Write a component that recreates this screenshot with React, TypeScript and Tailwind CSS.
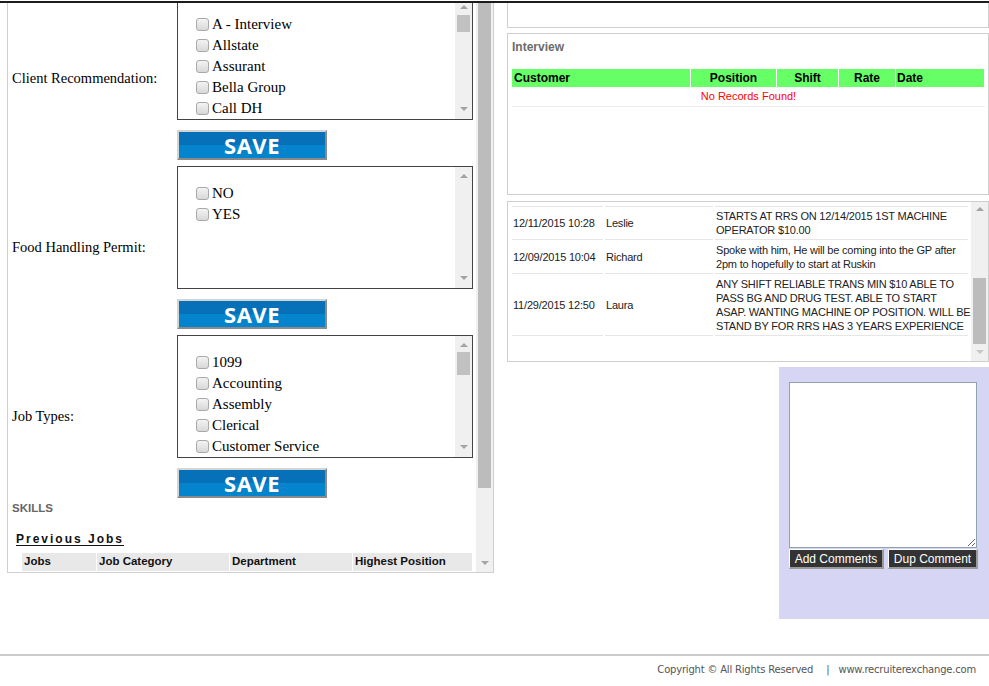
import React from 'react';

// Scrolled candidate profile page: checkbox pickers on the left, interview + notes on the right

interface PickerRow {
  label: string;
  items: string[];
  thumb?: { top: number; height: number };
}

const pickers: PickerRow[] = [
  {
    label: 'Client Recommendation:',
    items: ['A - Interview', 'Allstate', 'Assurant', 'Bella Group', 'Call DH'],
    thumb: { top: 6, height: 17 },
  },
  { label: 'Food Handling Permit:', items: ['NO', 'YES'] },
  {
    label: 'Job Types:',
    items: ['1099', 'Accounting', 'Assembly', 'Clerical', 'Customer Service'],
    thumb: { top: 5, height: 23 },
  },
];

interface Note {
  date: string;
  user: string;
  lines: string[];
  height: number;
}

const notes: Note[] = [
  {
    date: '12/11/2015 10:28',
    user: 'Leslie',
    lines: ['STARTS AT RRS ON 12/14/2015 1ST MACHINE', 'OPERATOR $10.00'],
    height: 33,
  },
  {
    date: '12/09/2015 10:04',
    user: 'Richard',
    lines: ['Spoke with him, He will be coming into the GP after', '2pm to hopefully to start at Ruskin'],
    height: 34,
  },
  {
    date: '11/29/2015 12:50',
    user: 'Laura',
    lines: [
      'ANY SHIFT RELIABLE TRANS MIN $10 ABLE TO',
      'PASS BG AND DRUG TEST. ABLE TO START',
      'ASAP. WANTING MACHINE OP POSITION. WILL BE',
      'STAND BY FOR RRS HAS 3 YEARS EXPERIENCE',
    ],
    height: 62,
  },
];

const UpArrow = ({ light }: { light?: boolean }) => (
  <span
    className={
      'block w-0 h-0 border-x-[4px] border-x-transparent border-b-[4px] ' +
      (light ? 'border-b-[#c8c8c8]' : 'border-b-[#a3a3a3]')
    }
  />
);

const DownArrow = ({ light }: { light?: boolean }) => (
  <span
    className={
      'block w-0 h-0 border-x-[4px] border-x-transparent border-t-[4px] ' +
      (light ? 'border-t-[#c8c8c8]' : 'border-t-[#a3a3a3]')
    }
  />
);

const Check = () => (
  <span className="block w-[13px] h-[13px] mr-[3px] shrink-0 rounded-[3px] border border-[#a9a9a9] bg-[linear-gradient(to_bottom,#f3f3f3,#d8d8d8)]" />
);

const SaveButton = () => (
  <div className="mt-[10px] w-[150px] h-[30px] border-2 border-t-[#d4d4d4] border-l-[#d4d4d4] border-b-[#8a8a8a] border-r-[#8a8a8a] bg-[linear-gradient(to_bottom,#0670b8_0%,#0670b8_50%,#0584ce_50%,#0584ce_100%)] flex items-center justify-center">
    <span className="font-['Open_Sans',sans-serif] font-bold text-[22px] leading-none text-white tracking-[0.5px]">SAVE</span>
  </div>
);

const Picker = ({ row }: { row: PickerRow }) => (
  <div className="flex">
    <div className="w-[169px] pl-[4px] flex items-center font-['Liberation_Serif',serif] text-[14.5px] text-black">
      {row.label}
    </div>
    <div className="w-[296px]">
      <div className="h-[123px] border border-[#444] flex">
        <div className="flex-1 pt-[16px] pl-[18px] font-['Liberation_Serif',serif] text-[15px] text-black">
          {row.items.map((item) => (
            <div key={item} className="flex items-center h-[21px]">
              <Check />
              <span>{item}</span>
            </div>
          ))}
        </div>
        <div className="w-[17px] bg-[#f0f0f0] flex flex-col items-center">
          <div className="mt-[7px]">
            <UpArrow />
          </div>
          {row.thumb && (
            <div
              className="w-[13px] bg-[#c1c1c1]"
              style={{ marginTop: row.thumb.top, height: row.thumb.height }}
            />
          )}
          <div className="mt-auto mb-[8px]">
            <DownArrow />
          </div>
        </div>
      </div>
      <SaveButton />
    </div>
  </div>
);

const App: React.FC = () => {
  return (
    <div className="w-[989px] h-[686px] bg-white overflow-hidden font-['Liberation_Sans',Arial,sans-serif]">
      <div className="h-[3px] border-b-2 border-[#1c1c1c]" />

      <div className="flex items-start h-[651px]">
        {/* Left scrolling form panel */}
        <div className="ml-[7px] w-[487px] h-[570px] border-x border-b border-[#cfcfcf] flex overflow-hidden">
          <div className="w-[468px] overflow-hidden">
            <div className="-mt-[6px] flex flex-col gap-[6px]">
              {pickers.map((p) => (
                <Picker key={p.label} row={p} />
              ))}
            </div>
            <div className="mt-[3px] pl-[4px] text-[11.5px] leading-[14px] font-bold text-[#666]">SKILLS</div>
            <div className="mt-[16px] pl-[8px] text-[12px] leading-[16px] font-bold tracking-[2px] text-[#111] underline underline-offset-2">
              Previous Jobs
            </div>
            <div className="mt-[6px] ml-[14px] w-[450px] grid grid-cols-[74px_132px_122px_119px] gap-x-px text-[11.5px] font-bold text-[#111]">
              {['Jobs', 'Job Category', 'Department', 'Highest Position'].map((h) => (
                <div key={h} className="h-[18px] bg-[#e8e8e8] pl-[2px] flex items-center">
                  {h}
                </div>
              ))}
            </div>
          </div>
          <div className="w-[17px] bg-[#f0f0f0] flex flex-col items-center">
            <div className="w-[13px] h-[485px] bg-[#bcbcbc]" />
            <div className="mt-auto mb-[7px]">
              <DownArrow />
            </div>
          </div>
        </div>

        {/* Right column */}
        <div className="ml-[13px] w-[482px] flex flex-col">
          <div className="h-[25px] border-x border-b border-[#cfcfcf]" />

          <div className="mt-[5px] h-[162px] border border-[#cfcfcf] pl-[4px] pr-[3px]">
            <div className="pt-[6px] text-[12px] leading-[14px] font-bold text-[#6b6b6b]">Interview</div>
            <div className="mt-[15px] grid grid-cols-[178px_85px_61px_56px_88px] gap-x-px text-[12px] font-bold text-black">
              <div className="h-[18px] bg-[#66ff66] pl-[2px] flex items-center">Customer</div>
              <div className="h-[18px] bg-[#66ff66] flex items-center justify-center">Position</div>
              <div className="h-[18px] bg-[#66ff66] flex items-center justify-center">Shift</div>
              <div className="h-[18px] bg-[#66ff66] flex items-center justify-center">Rate</div>
              <div className="h-[18px] bg-[#66ff66] pl-[1px] flex items-center">Date</div>
            </div>
            <div className="h-[20px] border-b border-[#ececec] flex items-center justify-center text-[11px] text-[#ff0000]">
              No Records Found!
            </div>
          </div>

          <div className="mt-[6px] h-[161px] border border-[#cfcfcf] flex">
            <div className="flex-1 pt-[4px] pl-[4px] pr-[3px] text-[11px] leading-[14px] tracking-[-0.2px] text-[#222] whitespace-nowrap overflow-hidden">
              {notes.map((n) => (
                <div key={n.date} className="grid grid-cols-[91px_108px_253px] gap-x-[2px]" style={{ height: n.height }}>
                  <div className="border-t border-[#e6e6e6] pl-[1px] flex items-center">{n.date}</div>
                  <div className="border-t border-[#e6e6e6] pl-[1px] flex items-center">{n.user}</div>
                  <div className="border-t border-[#e6e6e6] pl-[1px] flex flex-col justify-center">
                    {n.lines.map((l) => (
                      <div key={l}>{l}</div>
                    ))}
                  </div>
                </div>
              ))}
              <div className="grid grid-cols-[91px_108px_253px] gap-x-[2px]">
                <div className="border-t border-[#e6e6e6]" />
                <div className="border-t border-[#e6e6e6]" />
                <div className="border-t border-[#e6e6e6]" />
              </div>
            </div>
            <div className="w-[17px] bg-[#f0f0f0] flex flex-col items-center">
              <div className="mt-[5px]">
                <UpArrow />
              </div>
              <div className="mt-[67px] w-[13px] h-[66px] bg-[#bcbcbc]" />
              <div className="mt-auto mb-[7px]">
                <DownArrow light />
              </div>
            </div>
          </div>

          <div className="mt-[5px] ml-auto w-[210px] h-[252px] bg-[#d6d6f4] pl-[10px] pt-[15px]">
            <textarea className="block w-[188px] h-[166px] border border-[#8fa3ad] bg-white resize outline-none" />
            <div className="mt-[1px] flex gap-[4px] text-[12px] text-white">
              <div className="w-[95px] h-[20px] bg-[#333] border-t border-l border-white border-b-2 border-r-2 border-b-[#9a9a9a] border-r-[#9a9a9a] flex items-center justify-center">
                Add Comments
              </div>
              <div className="w-[90px] h-[20px] bg-[#333] border-t border-l border-white border-b-2 border-r-2 border-b-[#9a9a9a] border-r-[#9a9a9a] flex items-center justify-center">
                Dup Comment
              </div>
            </div>
          </div>
        </div>
      </div>

      {/* Footer */}
      <footer className="border-t-2 border-[#cccccc] pt-[7px] pr-[13px] flex justify-end font-['DejaVu_Sans',sans-serif] text-[10px] leading-[14px] tracking-[-0.2px] text-[#555]">
        <span>Copyright © All Rights Reserved</span>
        <span className="ml-[13px] mr-[9px]">|</span>
        <span>www.recruiterexchange.com</span>
      </footer>
    </div>
  );
};

export default App;
